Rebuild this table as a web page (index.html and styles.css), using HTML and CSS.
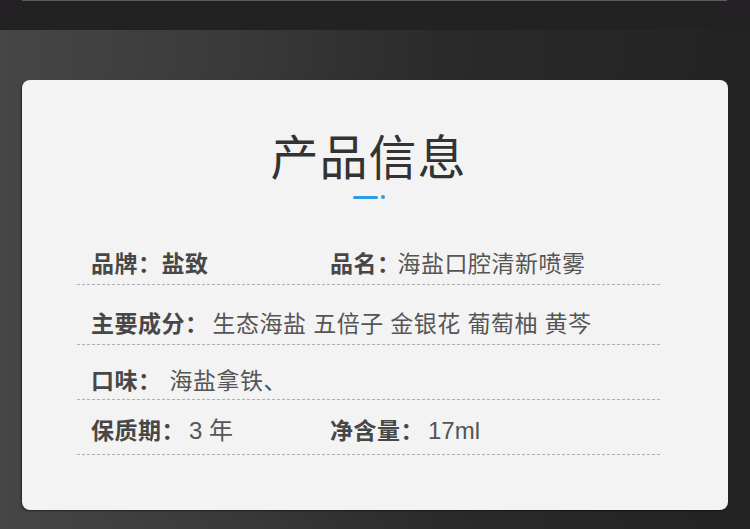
FILE: index.html
```html
<!DOCTYPE html>
<html>
<head>
    <meta charset="utf-8">
    <title>产品信息</title>
    <link rel="stylesheet" href="styles.css">
</head>
<body>
    <div class="topbar">
        <div class="topline"></div>
    </div>
    <div class="stage">
        <div class="card">
            <h1 class="title">产品信息</h1>
            <div class="accent"><span class="bar"></span><span class="dot"></span></div>
            <div class="info">
                <div class="row row-1">
                    <div class="cell cell-first"><b>品牌：盐致</b></div>
                    <div class="cell"><b>品名：</b><span class="tight">海盐口腔清新喷雾</span></div>
                </div>
                <div class="row row-2">
                    <div class="cell"><b>主要成分：</b><span class="list">生态海盐 五倍子 金银花 葡萄柚 黄芩</span></div>
                </div>
                <div class="row row-3">
                    <div class="cell"><b>口味：</b><span class="pad">海盐拿铁、</span></div>
                </div>
                <div class="row row-4">
                    <div class="cell cell-first"><b>保质期：</b><span class="num">3 年</span></div>
                    <div class="cell"><b>净含量：</b><span class="num">17ml</span></div>
                </div>
            </div>
        </div>
    </div>
</body>
</html>
```

FILE: styles.css
```css
html, body {
    margin: 0;
    padding: 0;
}

body {
    width: 750px;
    height: 529px;
    overflow: hidden;
    font-family: "Noto Sans CJK SC", "Noto Sans", sans-serif;
    background: linear-gradient(to right, #464646 0%, #3a3a3a 30%, #2a2a2a 60%, #232323 100%);
}

.topbar {
    height: 30px;
    background: #232123;
}

.topline {
    margin: 0 23px 0 22px;
    height: 1px;
    background: #5c5c5c;
}

.stage {
    padding: 50px 22px 19px 22px;
}

.card {
    height: 430px;
    box-sizing: border-box;
    background: #f3f3f3;
    border-radius: 8px;
    box-shadow: -1px 1px 2px rgba(0, 0, 0, 0.45);
    padding: 50px 68px 0 55px;
}

.title {
    margin: 0;
    font-size: 48px;
    line-height: 48px;
    font-weight: 400;
    color: #333;
    text-align: center;
    letter-spacing: 1px;
}

.accent {
    display: flex;
    justify-content: center;
    align-items: center;
    gap: 3px;
    margin-top: 17px;
}

.accent .bar {
    width: 25px;
    height: 3px;
    border-radius: 2px;
    background: #2b9ce6;
}

.accent .dot {
    width: 4px;
    height: 4px;
    border-radius: 50%;
    background: #2b9ce6;
}

.info {
    margin-top: 31px;
}

.row {
    display: flex;
    padding: 20px 14px 10px;
    border-bottom: 1px dashed #b0b0b0;
    font-size: 23px;
    line-height: 24px;
    letter-spacing: 0.5px;
    color: #555;
    white-space: nowrap;
}

.row-2 {
    padding-top: 25px;
}

.row-3 {
    padding-top: 22px;
    padding-bottom: 8px;
}

.row-4 {
    padding-top: 17px;
    padding-bottom: 11px;
}

.row b {
    font-weight: 700;
    color: #474747;
}

.cell-first {
    width: 239px;
}

.tight {
    margin-left: -3px;
}

.list {
    margin-left: 4px;
    word-spacing: 1px;
}

.pad {
    margin-left: 8px;
}

.num {
    margin-left: 4px;
    font-family: "Liberation Sans", "Noto Sans CJK SC", sans-serif;
    font-size: 24px;
    letter-spacing: 0;
}
```
